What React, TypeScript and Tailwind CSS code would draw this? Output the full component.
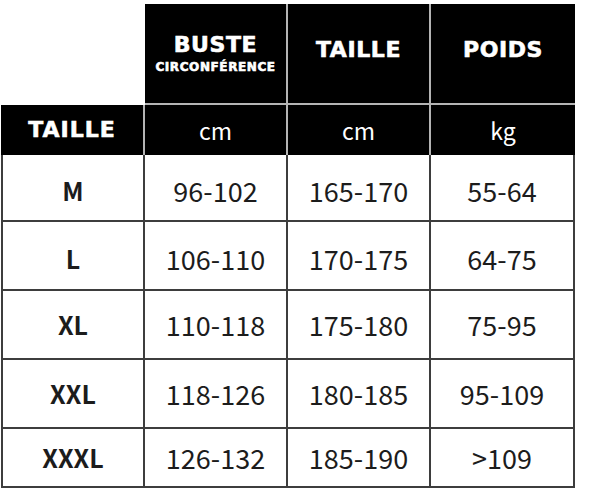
import React from "react";

const rows = [
  { size: "M", buste: "96-102", taille: "165-170", poids: "55-64", h: "h-[67px]" },
  { size: "L", buste: "106-110", taille: "170-175", poids: "64-75", h: "h-[69px]" },
  { size: "XL", buste: "110-118", taille: "175-180", poids: "75-95", h: "h-[69px]" },
  { size: "XXL", buste: "118-126", taille: "180-185", poids: "95-109", h: "h-[69px]" },
  { size: "XXXL", buste: "126-132", taille: "185-190", poids: ">109", h: "h-[59px]" },
];

const heading =
  "font-['DejaVu_Sans',sans-serif] font-bold text-white tracking-[0.6px] [-webkit-text-stroke:0.6px_white]";
const body = "font-['Noto_Sans_CJK_SC','Noto_Sans',sans-serif] text-[#1c1c1c]";

export default function App() {
  return (
    <div className="w-[599px] h-[501px] bg-white pt-[4px] pl-[1px]">
      <div className="grid grid-cols-[144px_143px_143px_144px] w-[574px]">
        {/* header row 1 */}
        <div className="h-[101px]" />
        <div className="h-[101px] bg-black border-r-2 border-b-2 border-[#b4b4b4] flex flex-col items-center pt-[30px]">
          <span className={`${heading} text-[22px] leading-[22px]`}>BUSTE</span>
          <span className={`${heading} text-[12px] leading-[12px] mt-[5px] tracking-[0.3px] [-webkit-text-stroke:0.3px_white]`}>
            CIRCONFÉRENCE
          </span>
        </div>
        <div className="h-[101px] bg-black border-r-2 border-b-2 border-[#b4b4b4] flex flex-col items-center pt-[35px]">
          <span className={`${heading} text-[22px] leading-[22px]`}>TAILLE</span>
        </div>
        <div className="h-[101px] bg-black border-b-2 border-[#b4b4b4] flex flex-col items-center pt-[35px]">
          <span className={`${heading} text-[22px] leading-[22px]`}>POIDS</span>
        </div>

        {/* header row 2 */}
        <div className="h-[50px] bg-black border-r-2 border-[#b4b4b4] flex items-center justify-center">
          <span className={`${heading} text-[22px] leading-[22px] tracking-[1px]`}>TAILLE</span>
        </div>
        {["cm", "cm", "kg"].map((u, i) => (
          <div
            key={i}
            className={`h-[50px] bg-black flex items-center justify-center ${i < 2 ? "border-r-2 border-[#b4b4b4]" : ""}`}
          >
            <span className="font-['Noto_Sans_CJK_SC','Noto_Sans',sans-serif] text-white text-[23px] leading-none">{u}</span>
          </div>
        ))}

        {/* data */}
        {rows.map((r, idx) => (
          <React.Fragment key={r.size}>
            <div
              className={`${r.h} border-l-2 border-r-2 border-b-2 border-[#3d3d3d] flex items-center justify-center ${idx < 2 ? "pt-[6px]" : ""}`}
            >
              <span className={`${body} font-bold text-[25px] leading-none`}>{r.size}</span>
            </div>
            {[r.buste, r.taille, r.poids].map((v, i) => (
              <div
                key={i}
                className={`${r.h} border-r-2 border-b-2 border-[#3d3d3d] flex items-center justify-center ${idx < 2 ? "pt-[6px]" : ""}`}
              >
                <span className={`${body} text-[27px] leading-none`}>{v}</span>
              </div>
            ))}
          </React.Fragment>
        ))}
      </div>
    </div>
  );
}
